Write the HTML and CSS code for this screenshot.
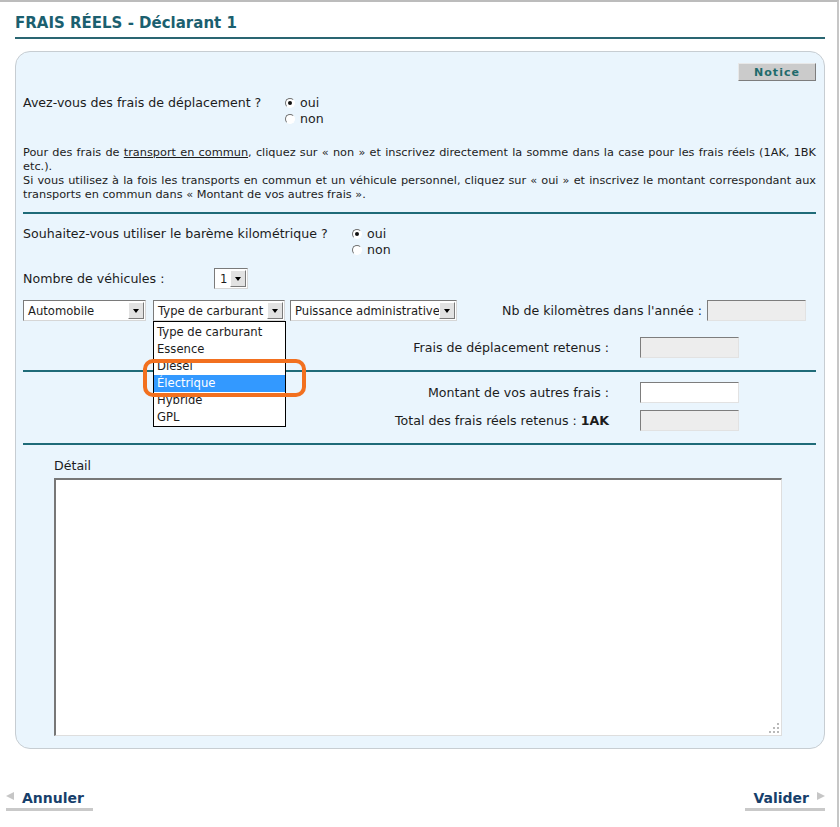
FILE: index.html
```html
<!DOCTYPE html>
<html lang="fr">
<head>
<meta charset="utf-8">
<title>Frais réels - Déclarant 1</title>
<link rel="stylesheet" href="styles.css">
</head>
<body>
<div class="frame">
  <div class="page">
    <h1 class="title">FRAIS RÉELS - Déclarant 1</h1>
    <div class="panel">
      <div class="notice-row"><span class="btn-notice">Notice</span></div>

      <div class="q-row q1">
        <div class="q-label q1-label">Avez-vous des frais de déplacement ?</div>
        <div class="radios">
          <div class="radio-line"><span class="radio checked"></span>oui</div>
          <div class="radio-line"><span class="radio"></span>non</div>
        </div>
      </div>

      <div class="info">
        <span class="jl">Pour des frais de <u>transport en commun</u>, cliquez sur « non » et inscrivez directement la somme dans la case pour les frais réels (1AK, 1BK</span>
        <span class="ll">etc.).</span>
        <span class="jl">Si vous utilisez à la fois les transports en commun et un véhicule personnel, cliquez sur « oui » et inscrivez le montant correspondant aux</span>
        <span class="ll">transports en commun dans « Montant de vos autres frais ».</span>
      </div>

      <div class="divider d1"></div>

      <div class="q-row q2">
        <div class="q-label q2-label">Souhaitez-vous utiliser le barème kilométrique ?</div>
        <div class="radios">
          <div class="radio-line"><span class="radio checked"></span>oui</div>
          <div class="radio-line"><span class="radio"></span>non</div>
        </div>
      </div>

      <div class="nb-row">
        <div class="nb-label">Nombre de véhicules :</div>
        <div class="sel sel-nb"><span class="sel-text">1</span><span class="sel-btn"><i class="tri"></i></span></div>
      </div>

      <div class="veh-row">
        <div class="sel sel-veh"><span class="sel-text">Automobile</span><span class="sel-btn"><i class="tri"></i></span></div>
        <div class="sel-wrap">
          <div class="sel sel-carb"><span class="sel-text">Type de carburant</span><span class="sel-btn"><i class="tri"></i></span></div>
          <ul class="dropdown">
            <li>Type de carburant</li>
            <li>Essence</li>
            <li>Diesel</li>
            <li class="hl">Électrique</li>
            <li>Hybride</li>
            <li>GPL</li>
          </ul>
          <div class="ring"></div>
        </div>
        <div class="sel sel-puis"><span class="sel-text">Puissance administrative</span><span class="sel-btn"><i class="tri"></i></span></div>
        <div class="km-label">Nb de kilomètres dans l'année :</div>
        <div class="field field-gray field-km"></div>
      </div>

      <div class="res-row r-dep">
        <div class="res-label">Frais de déplacement retenus :</div>
        <div class="field field-gray"></div>
      </div>

      <div class="divider d2"></div>

      <div class="res-row r-mont">
        <div class="res-label">Montant de vos autres frais :</div>
        <div class="field"></div>
      </div>
      <div class="res-row r-tot">
        <div class="res-label">Total des frais réels retenus : <b>1AK</b></div>
        <div class="field field-gray"></div>
      </div>

      <div class="divider d3"></div>

      <div class="detail">
        <div class="detail-label">Détail</div>
        <div class="textarea">
          <svg class="grip" width="12" height="12" viewBox="0 0 12 12">
            <g fill="#b9b9b9">
              <rect x="9" y="1" width="2" height="2"/>
              <rect x="5" y="5" width="2" height="2"/>
              <rect x="9" y="5" width="2" height="2"/>
              <rect x="1" y="9" width="2" height="2"/>
              <rect x="5" y="9" width="2" height="2"/>
              <rect x="9" y="9" width="2" height="2"/>
            </g>
          </svg>
        </div>
      </div>
    </div>
  </div>

  <div class="footer">
    <a class="nav nav-prev" href="#"><span class="arr arr-l"></span>Annuler</a>
    <a class="nav nav-next" href="#">Valider<span class="arr arr-r"></span></a>
  </div>
</div>
</body>
</html>
```
FILE: styles.css
```css
html, body {
  margin: 0;
  padding: 0;
  background: #fff;
}
body {
  font-family: "DejaVu Sans", Verdana, sans-serif;
  color: #1c1c1c;
}
.frame {
  width: 839px;
  height: 827px;
  box-sizing: border-box;
  border-top: 2px solid #bcbcbc;
  border-right: 2px solid #c6c6c6;
  overflow: hidden;
}
.page {
  padding: 0 12px 0 15px;
}
.title {
  margin: 12px 0 0;
  padding: 0 0 5px;
  font-size: 15px;
  line-height: 18px;
  font-weight: bold;
  color: #1b5f6f;
  border-bottom: 2px solid #2a6672;
}
.panel {
  margin-top: 12px;
  border: 1px solid #c7cdd2;
  border-radius: 15px;
  background: #eaf5fd;
  padding: 11px 8px 12px 7px;
  font-size: 12.6px;
}
.notice-row {
  display: flex;
  justify-content: flex-end;
}
.btn-notice {
  display: flex;
  align-items: center;
  justify-content: center;
  width: 78px;
  height: 18px;
  box-sizing: border-box;
  background: #cbcbcb;
  border: 1px solid;
  border-color: #e8e8e8 #7d7d7d #7d7d7d #e8e8e8;
  color: #1f6b6c;
  font-weight: bold;
  font-size: 11px;
  letter-spacing: 1px;
}
.q-row {
  display: flex;
  line-height: 16px;
}
.q1 { margin-top: 14px; }
.q2 { margin-top: 12px; }
.q1-label { width: 262px; }
.q2-label { width: 329px; }
.radio-line {
  display: flex;
  align-items: center;
}
.radio {
  width: 8px;
  height: 8px;
  border: 1px solid;
  border-color: #6f6f6f #ffffff #ffffff #6f6f6f;
  border-radius: 50%;
  background: #fff;
  margin-right: 5px;
  display: flex;
  align-items: center;
  justify-content: center;
}
.radio.checked::after {
  content: "";
  width: 4px;
  height: 4px;
  border-radius: 50%;
  background: #111;
}
.info {
  margin-top: 19px;
  font-size: 11.3px;
  line-height: 14px;
}
.info span {
  display: block;
  white-space: nowrap;
}
.info .jl {
  text-align: justify;
  text-align-last: justify;
}
.divider {
  height: 2px;
  background: #1f6b78;
}
.d1 { margin-top: 10px; }
.d2 { margin-top: 12px; }
.d3 { margin-top: 12px; }
.nb-row {
  display: flex;
  align-items: center;
  margin-top: 10px;
}
.nb-label {
  width: 191px;
}
.sel {
  display: flex;
  align-items: center;
  height: 21px;
  box-sizing: border-box;
  border: 1px solid;
  border-color: #7a7a7a #d6d6d6 #d6d6d6 #7a7a7a;
  background: #fff;
  font-size: 11.6px;
}
.sel-text {
  flex: 1;
  padding-left: 4px;
  white-space: nowrap;
  overflow: hidden;
}
.sel-btn {
  width: 16px;
  height: 17px;
  margin-right: 1px;
  box-sizing: border-box;
  background: #e2e2e2;
  border: 1px solid;
  border-color: #ffffff #7a7a7a #7a7a7a #ffffff;
  display: flex;
  align-items: center;
  justify-content: center;
}
.tri {
  width: 0;
  height: 0;
  border-left: 3.5px solid transparent;
  border-right: 3.5px solid transparent;
  border-top: 4px solid #000;
}
.sel-nb { width: 34px; }
.sel-nb .sel-text { padding-left: 5px; }
.veh-row {
  display: flex;
  align-items: center;
  margin-top: 11px;
}
.sel-veh { width: 123px; margin-right: 7px; }
.sel-wrap { position: relative; margin-right: 5px; }
.sel-carb { width: 132px; }
.sel-puis { width: 167px; }
.km-label {
  margin-left: 45px;
  width: 205px;
  white-space: nowrap;
}
.field {
  width: 99px;
  height: 21px;
  box-sizing: border-box;
  border: 1px solid;
  border-color: #7d7d7d #e2e2e2 #e2e2e2 #7d7d7d;
  background: #fff;
}
.field-gray { background: #ededed; }
.dropdown {
  position: absolute;
  left: 0;
  top: 21px;
  z-index: 2;
  width: 133px;
  margin: 0;
  padding: 2px 0 0;
  list-style: none;
  background: #fff;
  border: 1px solid #000;
  box-sizing: border-box;
  height: 106px;
  font-size: 11.6px;
}
.dropdown li {
  height: 17px;
  line-height: 17px;
  padding-left: 3px;
  white-space: nowrap;
}
.dropdown li.hl {
  background: #3399ff;
  color: #fff;
}
.ring {
  position: absolute;
  z-index: 3;
  left: -10px;
  top: 59px;
  width: 163px;
  height: 38px;
  box-sizing: border-box;
  border: 4px solid #f2701f;
  border-radius: 10px;
}
.res-row {
  display: flex;
  align-items: center;
  justify-content: flex-end;
  padding-right: 77px;
}
.res-label {
  margin-right: 31px;
  text-align: right;
}
.r-dep { margin-top: 16px; }
.r-mont { margin-top: 10px; }
.r-tot { margin-top: 7px; }
.detail {
  padding-left: 31px;
  margin-top: 13px;
}
.detail-label {
  line-height: 16px;
}
.textarea {
  position: relative;
  margin-top: 4px;
  width: 728px;
  height: 258px;
  box-sizing: border-box;
  background: #fff;
  border-style: solid;
  border-width: 2px 1px 1px 2px;
  border-color: #777777 #dedede #dedede #777777;
}
.grip {
  position: absolute;
  right: 1px;
  bottom: 1px;
}
.footer {
  display: flex;
  justify-content: space-between;
  align-items: flex-end;
  margin-top: 41px;
  padding: 0 12px 0 6px;
}
.nav {
  display: flex;
  align-items: center;
  font-size: 14px;
  font-weight: bold;
  color: #173f6b;
  text-decoration: none;
  border-bottom: 3px solid #c9c9c9;
  line-height: 17px;
  padding-bottom: 1px;
}
.nav-prev { width: 87px; }
.nav-next { width: 80px; justify-content: flex-end; }
.arr {
  width: 0;
  height: 0;
  border-top: 4px solid transparent;
  border-bottom: 4px solid transparent;
}
.arr-l {
  border-right: 8px solid #c6c6c6;
  margin-right: 8px;
  margin-top: -6px;
}
.arr-r {
  border-left: 8px solid #c6c6c6;
  margin-left: 8px;
  margin-top: -6px;
}
```
